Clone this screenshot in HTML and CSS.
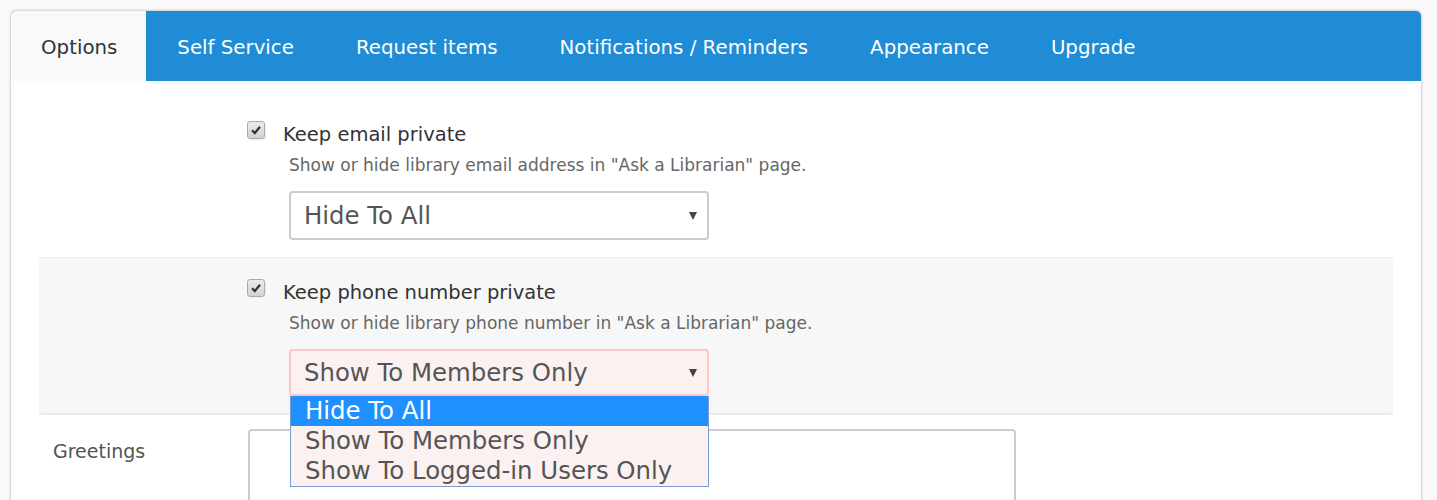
FILE: index.html
```html
<!DOCTYPE html>
<html>
<head>
<meta charset="utf-8">
<link rel="stylesheet" href="styles.css">
</head>
<body>
<div class="card">
  <nav class="tabs">
    <span class="tab active">Options</span>
    <span class="tab">Self Service</span>
    <span class="tab">Request items</span>
    <span class="tab">Notifications / Reminders</span>
    <span class="tab">Appearance</span>
    <span class="tab">Upgrade</span>
  </nav>
  <div class="content">
    <div class="row first">
      <div class="row-label"></div>
      <div class="row-body">
        <div class="check-line">
          <span class="checkbox"><svg viewBox="0 0 12 12" width="12" height="12"><path d="M2 6.2 L4.8 9 L10 2.8" fill="none" stroke="#333" stroke-width="2.2"/></svg></span>
          <span class="check-label">Keep email private</span>
        </div>
        <div class="desc">Show or hide library email address in "Ask a Librarian" page.</div>
        <div class="select">
          <span>Hide To All</span>
          <span class="arrow"></span>
        </div>
      </div>
    </div>
    <div class="row alt">
      <div class="row-label"></div>
      <div class="row-body">
        <div class="check-line">
          <span class="checkbox"><svg viewBox="0 0 12 12" width="12" height="12"><path d="M2 6.2 L4.8 9 L10 2.8" fill="none" stroke="#333" stroke-width="2.2"/></svg></span>
          <span class="check-label">Keep phone number private</span>
        </div>
        <div class="desc">Show or hide library phone number in "Ask a Librarian" page.</div>
        <div class="select-wrap">
          <div class="select error">
            <span>Show To Members Only</span>
            <span class="arrow"></span>
          </div>
          <ul class="dropdown">
            <li class="hl">Hide To All</li>
            <li>Show To Members Only</li>
            <li>Show To Logged-in Users Only</li>
          </ul>
        </div>
      </div>
    </div>
    <div class="row">
      <div class="row-label greet">Greetings</div>
      <div class="row-body tight">
        <div class="textarea"></div>
      </div>
    </div>
  </div>
</div>
</body>
</html>
```
FILE: styles.css
```css
html, body {
  margin: 0;
  padding: 0;
}
body {
  background: #f9f9f9;
  font-family: "DejaVu Sans", Verdana, sans-serif;
  padding: 11px 16px 0 11px;
  height: 500px;
  box-sizing: border-box;
  overflow: hidden;
}
.card {
  background: #fff;
  border-radius: 5px;
  box-shadow: 0 0 3px rgba(0,0,0,0.35);
  height: 600px;
  overflow: hidden;
}
.tabs {
  display: flex;
  background: #1f8cd5;
  height: 70px;
  margin-left: 1px;
}
.tab {
  display: flex;
  align-items: center;
  padding: 2px 31px 0;
  color: #fff;
  font-size: 19.8px;
}
.tab.active {
  background: #f9f9f9;
  color: #333;
  padding: 2px 29px 0 29px;
}
.content {
  padding: 18px 28px 0 28px;
}
.row {
  display: grid;
  grid-template-columns: 208px 1fr;
  padding: 21px 0 16px;
  border-top: 1px dotted #dcdcdc;
}
.row.first {
  border-top: none;
  padding-bottom: 17px;
}
.row.alt {
  background: #f7f7f7;
  border-bottom: 1px dotted #dcdcdc;
  border-radius: 3px;
  padding: 20px 0 17px;
}
.row-label {
  font-size: 19px;
  color: #555;
}
.greet {
  padding-left: 14px;
  padding-top: 4px;
}
.row-body.tight {
  margin-top: -7px;
}
.check-line {
  display: flex;
  align-items: flex-start;
}
.checkbox {
  width: 16px;
  height: 16px;
  border: 1px solid #aaa;
  border-radius: 3px;
  background: linear-gradient(#ececec, #d2d2d2);
  display: flex;
  align-items: center;
  justify-content: center;
  margin-top: 1px;
  box-shadow: 1px 1px 0 #eee;
}
.check-label {
  margin-left: 18px;
  font-size: 19.5px;
  color: #333;
  line-height: 24px;
  position: relative;
  top: 3px;
}
.desc {
  margin: 11px 0 0 42px;
  font-size: 17px;
  color: #666;
  line-height: 20px;
}
.select {
  margin: 16px 0 0 42px;
  border: 2px solid #ccc;
  border-radius: 4px;
  display: flex;
  align-items: center;
  justify-content: space-between;
  padding: 0 10px 0 13px;
  box-sizing: border-box;
  width: 420px;
  height: 49px;
  font-size: 24.4px;
  color: #555;
  background: #fff;
}
.select-wrap {
  position: relative;
  margin: 16px 0 0 42px;
  width: 420px;
}
.select.error {
  margin: 0;
  height: 47px;
  border-color: #fcc6c6;
  background: #fcf1f1;
}
.arrow {
  width: 0;
  height: 0;
  border-left: 4.5px solid transparent;
  border-right: 4.5px solid transparent;
  border-top: 8px solid #444;
}
.dropdown {
  position: absolute;
  left: 1px;
  top: 47px;
  width: 419px;
  box-sizing: border-box;
  margin: 0;
  padding: 0;
  list-style: none;
  background: #fcf1f1;
  border: 1px solid #7a9ad6;
  border-top: none;
  z-index: 5;
}
.dropdown li {
  height: 30px;
  line-height: 30px;
  padding-left: 14px;
  font-size: 24.4px;
  color: #555;
}
.dropdown li.hl {
  background: #1e90ff;
  color: #fff;
}
.textarea {
  width: 768px;
  height: 120px;
  border: 2px solid #ccc;
  border-radius: 4px;
  box-sizing: border-box;
  margin-left: 1px;
}
```
